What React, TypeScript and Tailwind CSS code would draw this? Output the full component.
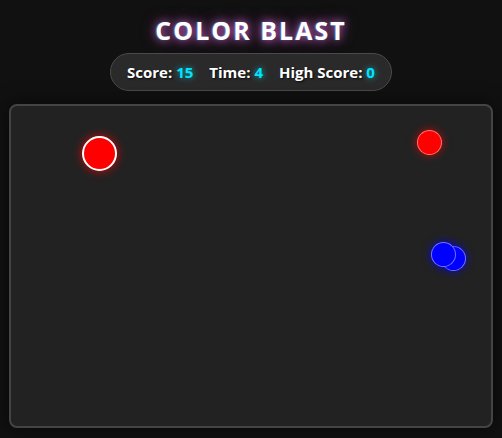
import React from 'react'

type Dot = { id: number; x: number; y: number; size: number; color: string; ring: string; glow: string }

// positions are relative to the game board
const dots: Dot[] = [
  { id: 1, x: 90, y: 49, size: 35, color: '#ff0000', ring: 'border-2 border-white', glow: '0 0 10px rgba(255,0,0,0.8)' },
  { id: 2, x: 420, y: 38, size: 25, color: '#ff0000', ring: 'border border-[rgba(255,255,255,0.45)]', glow: '0 0 8px rgba(255,0,0,0.7)' },
  { id: 3, x: 444, y: 154, size: 25, color: '#0000ff', ring: 'border border-[rgba(255,255,255,0.45)]', glow: '0 0 8px rgba(0,0,255,0.8)' },
  { id: 4, x: 434, y: 150, size: 25, color: '#0000ff', ring: 'border border-[rgba(255,255,255,0.45)]', glow: '0 0 8px rgba(0,0,255,0.8)' },
]

const Stat: React.FC<{ label: string; value: number }> = ({ label, value }) => (
  <span className="text-white">
    {label}:{' '}
    <span className="text-[#00e5ff] [text-shadow:0_0_6px_rgba(0,229,255,0.7)]">{value}</span>
  </span>
)

export default function App() {
  return (
    <div className="min-h-screen bg-[#111111] flex flex-col items-center pt-[14px] px-[9px] pb-[10px] font-['Open_Sans','Noto_Sans',sans-serif]">
      <h1 className="text-[25px] leading-[32px] font-bold tracking-[2px] text-white [text-shadow:0_0_8px_rgba(255,130,255,0.75),0_0_16px_rgba(220,80,220,0.5),-1px_0_1px_rgba(0,200,255,0.6)]">
        COLOR BLAST
      </h1>

      <div className="mt-[7px] h-[38px] flex items-center gap-4 px-4 rounded-full bg-[#2a2a2a] border border-[#4a4a4a] text-[15px] font-bold [text-shadow:1px_1px_2px_rgba(0,0,0,0.8)]">
        <Stat label="Score" value={15} />
        <Stat label="Time" value={4} />
        <Stat label="High Score" value={0} />
      </div>

      <div className="relative mt-[13px] w-full h-[324px] rounded-lg bg-[#222222] border-2 border-[#444444] shadow-[0_0_20px_rgba(0,0,0,0.6)] overflow-hidden">
        {dots.map((d) => (
          <div
            key={d.id}
            className={`absolute rounded-full ${d.ring}`}
            style={{
              left: d.x - 2 - d.size / 2,
              top: d.y - 2 - d.size / 2,
              width: d.size,
              height: d.size,
              backgroundColor: d.color,
              boxShadow: d.glow,
            }}
          />
        ))}
      </div>
    </div>
  )
}
